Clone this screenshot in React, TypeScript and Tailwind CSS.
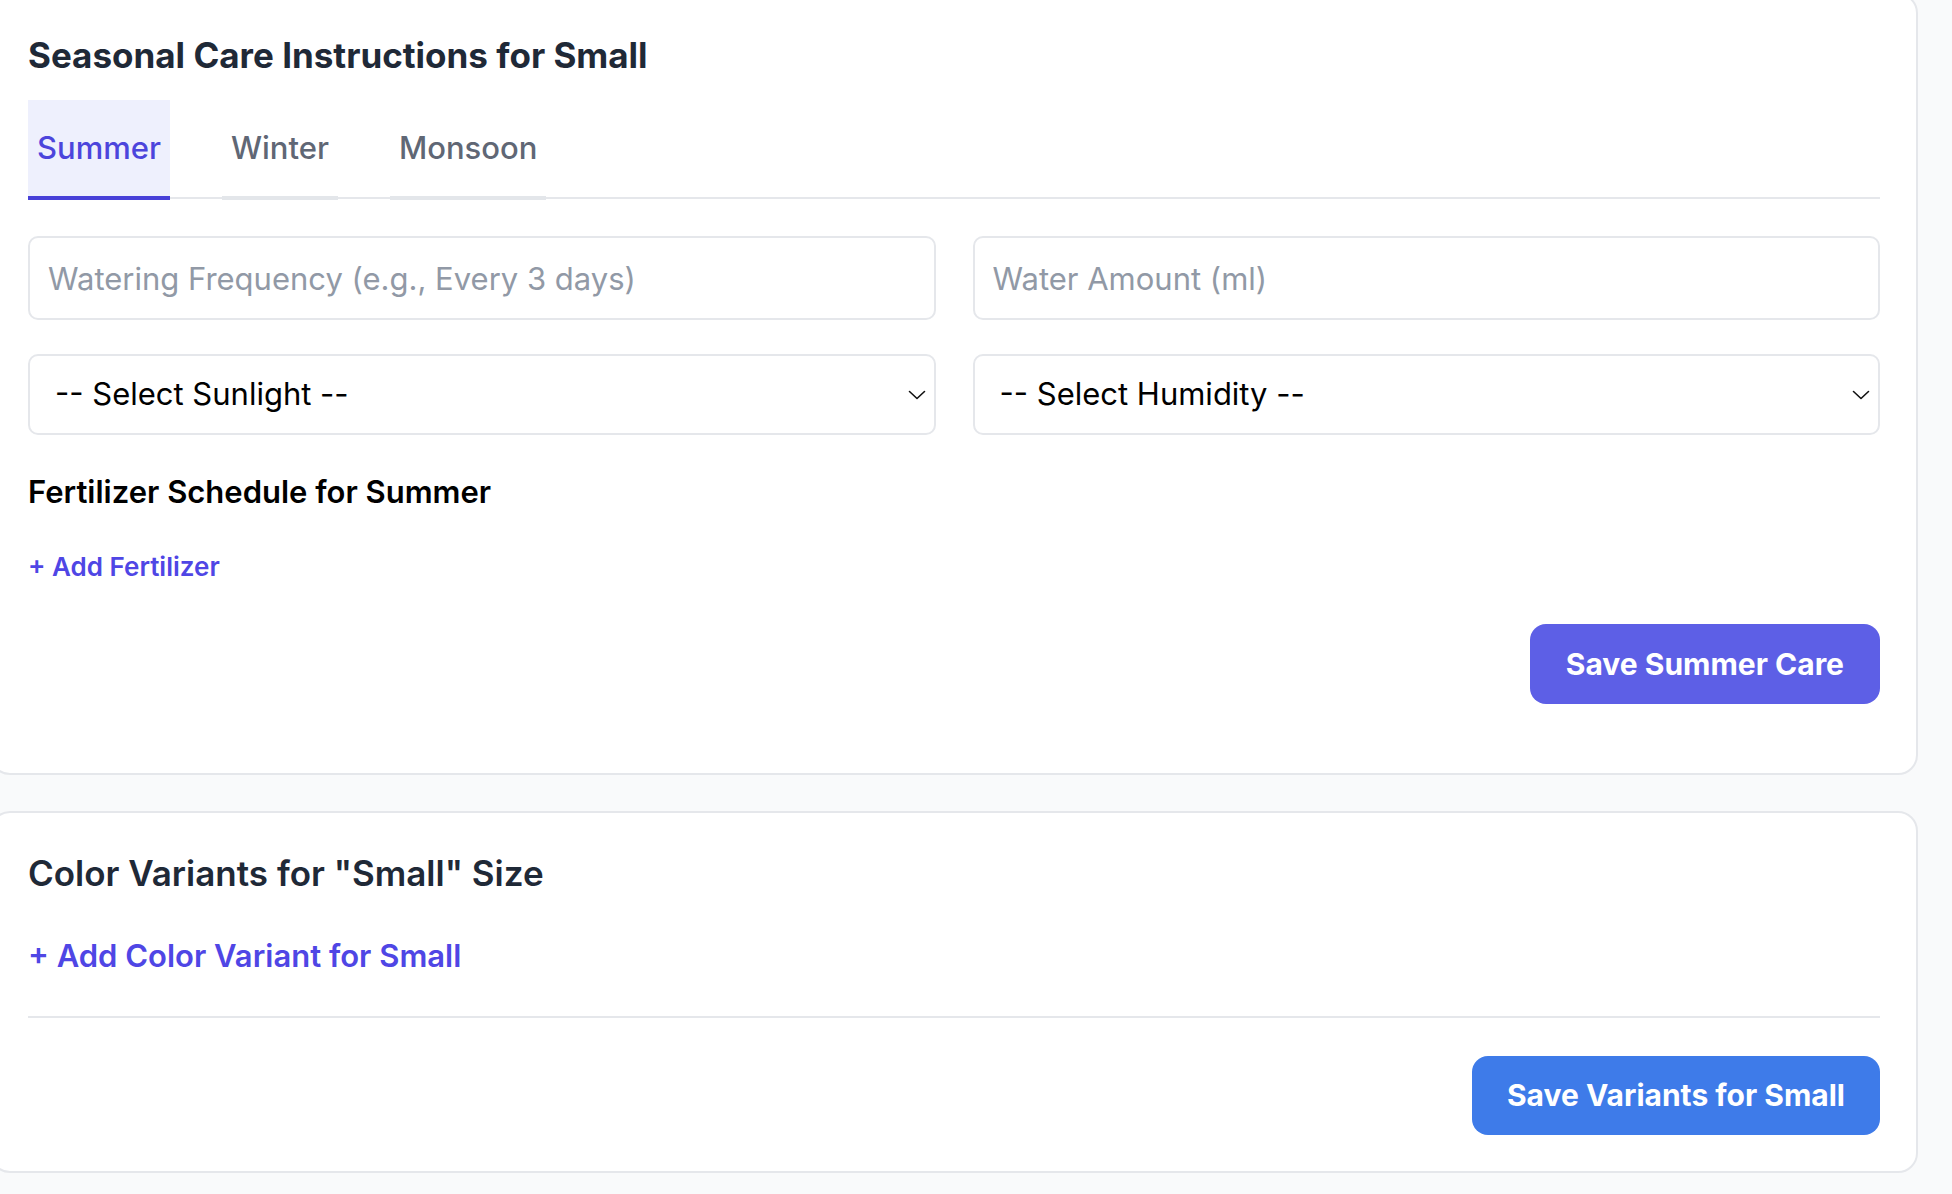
import { useState } from 'react';

const seasons = ['Summer', 'Winter', 'Monsoon'];

function Chevron() {
  return (
    <svg
      className="pointer-events-none absolute right-[10px] top-1/2 -translate-y-1/2"
      width="18"
      height="10"
      viewBox="0 0 18 10"
      fill="none"
    >
      <path d="M1.5 1.5 L9 8.5 L16.5 1.5" stroke="#111" strokeWidth="1.6" strokeLinecap="round" strokeLinejoin="round" />
    </svg>
  );
}

export default function App() {
  const [season, setSeason] = useState('Summer');

  return (
    <div className="min-h-screen overflow-hidden bg-[#f9fafb] font-['Inter',sans-serif]">
      <div className="-mt-[7px] -ml-[10px] flex w-[1928px] flex-col gap-[36px]">
        {/* Seasonal care */}
        <div className="rounded-[20px] border-2 border-[#e5e7eb] bg-white px-[36px] pt-[36px] pb-[69px]">
          <h2 className="text-[35px] font-bold leading-[48px] text-[#1f2937]">
            Seasonal Care Instructions for Small
          </h2>

          <div className="mt-[21px] flex gap-[52px] border-b-2 border-[#e5e7eb]">
            {seasons.map((s) => {
              const active = s === season;
              return (
                <button
                  key={s}
                  onClick={() => setSeason(s)}
                  className={`-mb-[3px] border-b-4 px-[9px] py-[24px] text-[31px] font-medium leading-[48px] ${
                    active
                      ? 'border-[#4740d8] bg-[#eef0fd] text-[#4c45dc]'
                      : 'border-[#e3e6ea] text-[#606775]'
                  }`}
                >
                  {s}
                </button>
              );
            })}
          </div>

          <div className="mt-[37px] grid grid-cols-2 gap-x-[37px] gap-y-[34px]">
            <input
              placeholder="Watering Frequency (e.g., Every 3 days)"
              className="h-[84px] rounded-[10px] border-2 border-[#e5e7eb] px-[18px] text-[31px] text-[#111] outline-none placeholder:text-[#9199a6]"
            />
            <input
              placeholder="Water Amount (ml)"
              className="h-[84px] rounded-[10px] border-2 border-[#e5e7eb] px-[18px] text-[31px] text-[#111] outline-none placeholder:text-[#9199a6]"
            />
            <div className="relative">
              <select className="h-[81px] w-full appearance-none rounded-[10px] border-2 border-[#e5e7eb] bg-white pl-[25px] text-[31px] text-black outline-none">
                <option>-- Select Sunlight --</option>
              </select>
              <Chevron />
            </div>
            <div className="relative">
              <select className="h-[81px] w-full appearance-none rounded-[10px] border-2 border-[#e5e7eb] bg-white pl-[25px] text-[31px] text-black outline-none">
                <option>-- Select Humidity --</option>
              </select>
              <Chevron />
            </div>
          </div>

          <h3 className="mt-[37px] text-[31px] font-semibold leading-[40px] text-black">
            Fertilizer Schedule for {season}
          </h3>
          <button className="mt-[37px] block text-[26px] font-semibold leading-[36px] text-[#4f46e5]">
            + Add Fertilizer
          </button>

          <div className="mt-[39px] flex justify-end">
            <button className="h-[80px] rounded-[16px] bg-[#5d5fe6] px-[36px] text-[30px] font-bold text-white">
              Save {season} Care
            </button>
          </div>
        </div>

        {/* Color variants */}
        <div className="rounded-[20px] border-2 border-[#e5e7eb] bg-white px-[36px] pt-[36px] pb-[36px]">
          <h2 className="text-[35px] font-semibold leading-[48px] text-[#1f2937]">
            Color Variants for "Small" Size
          </h2>
          <button className="mt-[39px] block text-[31px] font-semibold leading-[40px] text-[#4f46e5]">
            + Add Color Variant for Small
          </button>
          <div className="mt-[40px] border-t-2 border-[#e5e7eb]" />
          <div className="mt-[38px] flex justify-end">
            <button className="h-[79px] rounded-[16px] bg-[#3e7be9] px-[35px] text-[30px] font-bold text-white">
              Save Variants for Small
            </button>
          </div>
        </div>
      </div>
    </div>
  );
}
